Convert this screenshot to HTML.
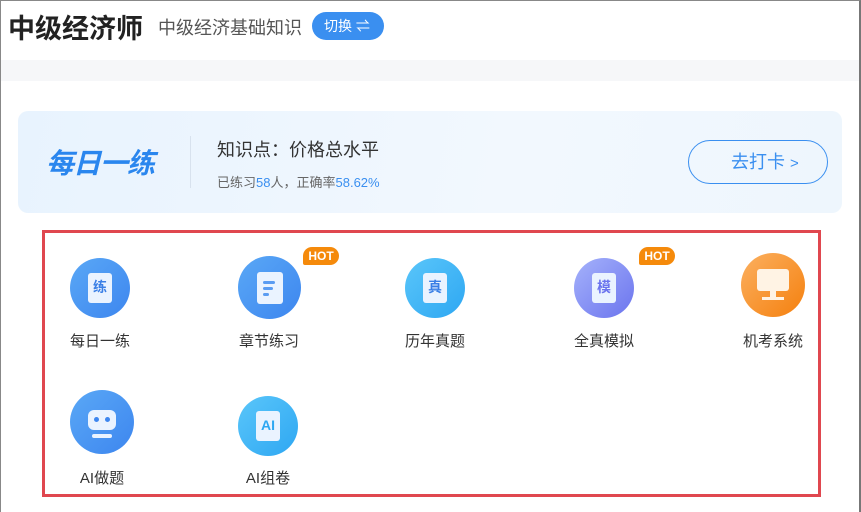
<!DOCTYPE html>
<html><head><meta charset="utf-8"><style>
*{margin:0;padding:0;box-sizing:border-box}
body{width:861px;height:512px;overflow:hidden;background:#fff;font-family:"Liberation Sans","Noto Sans CJK SC",sans-serif;position:relative}
.frame{position:absolute;left:0;top:0;width:861px;height:512px;border:1px solid #888;border-right:2px solid #777;border-bottom:none}
.abs{position:absolute}
.title{left:8px;top:7px;font-size:27px;font-weight:bold;color:#222}
.sub{left:158px;top:14px;font-size:18px;color:#555}
.sw{left:312px;top:12px;width:72px;height:28px;border-radius:14px;background:#3a8ff0;color:#fff;font-size:14px;line-height:28px;padding-left:12px}
.band{left:1px;top:60px;width:858px;height:21px;background:#f6f7f9}
.card{left:18px;top:111px;width:824px;height:102px;border-radius:10px;background:linear-gradient(100deg,#e8f3fe,#f2f8fe 60%,#eef6fd)}
.logo{left:46px;top:142px;font-size:28px;font-weight:bold;font-style:italic;color:#2a86ee;letter-spacing:-1px}
.div{left:190px;top:136px;width:1px;height:52px;background:#d8e2ee}
.kp{left:217px;top:136px;font-size:18px;color:#333}
.st{left:217px;top:172px;font-size:13px;color:#666}
.st b{font-weight:normal;color:#3a8ff0}
.btn{left:688px;top:140px;width:140px;height:44px;border:1px solid #3a8ff0;border-radius:22px;color:#3a8ff0;font-size:18px;line-height:42px;padding-left:42px}
.red{left:42px;top:230px;width:779px;height:267px;border:3px solid #e0474f}
.c{position:absolute;border-radius:50%}
.lb{position:absolute;width:120px;text-align:center;font-size:15px;color:#333}
.doc{position:absolute;left:50%;top:50%;width:24px;height:30px;margin:-15px 0 0 -12px;background:#eaf3ff;border-radius:3px;color:#3a7fe6;font-size:14px;font-weight:bold;line-height:28px;text-align:center}
.hot{position:absolute;background:#f58a0b;color:#fff;font-size:12px;font-weight:bold;width:36px;height:18px;line-height:18px;border-radius:9px 9px 9px 2px;text-align:center}
.ln{position:absolute;height:3px;background:#5a9cf2;border-radius:2px}
</style></head><body>
<div class="frame"></div>
<div class="abs title">中级经济师</div>
<div class="abs sub">中级经济基础知识</div>
<div class="abs sw">切换 ⇌</div>
<div class="abs band"></div>
<div class="abs card"></div>
<div class="abs logo">每日一练</div>
<div class="abs div"></div>
<div class="abs kp">知识点：价格总水平</div>
<div class="abs st">已练习<b>58</b>人，正确率<b>58.62%</b></div>
<div class="abs btn">去打卡 <span style="font-size:15px">&gt;</span></div>
<div class="abs red"></div>

<div class="c" style="left:70px;top:258px;width:60px;height:60px;background:linear-gradient(135deg,#5aa8f6,#3d86ef)"><div class="doc">练</div></div>
<div class="lb" style="left:40px;top:330px">每日一练</div>

<div class="c" style="left:238px;top:256px;width:63px;height:63px;background:linear-gradient(135deg,#5aa8f6,#3d86ef)"><div class="doc" style="width:26px;height:32px;margin:-16px 0 0 -13px"><div class="ln" style="left:6px;top:9px;width:12px"></div><div class="ln" style="left:6px;top:15px;width:10px"></div><div class="ln" style="left:6px;top:21px;width:6px"></div></div></div>
<div class="lb" style="left:209px;top:330px">章节练习</div>

<div class="c" style="left:405px;top:258px;width:60px;height:60px;background:linear-gradient(135deg,#5ac6fa,#2ea7f2)"><div class="doc">真</div></div>
<div class="lb" style="left:375px;top:330px">历年真题</div>

<div class="c" style="left:574px;top:258px;width:60px;height:60px;background:linear-gradient(135deg,#a5b2fb,#6b74ee)"><div class="doc" style="color:#6b74ee">模</div></div>
<div class="lb" style="left:544px;top:330px">全真模拟</div>

<div class="c" style="left:741px;top:253px;width:64px;height:64px;background:linear-gradient(135deg,#fbb060,#f5800e)"><div style="position:absolute;left:16px;top:16px;width:32px;height:22px;background:#fff3e4;border-radius:3px"></div><div style="position:absolute;left:29px;top:38px;width:6px;height:6px;background:#fff3e4"></div><div style="position:absolute;left:21px;top:44px;width:22px;height:3px;background:#fff3e4"></div></div>
<div class="lb" style="left:713px;top:330px">机考系统</div>

<div class="hot" style="left:303px;top:247px">HOT</div>
<div class="hot" style="left:639px;top:247px">HOT</div>

<div class="c" style="left:70px;top:390px;width:64px;height:64px;background:linear-gradient(135deg,#5aa8f6,#3d86ef)"><div style="position:absolute;left:18px;top:20px;width:28px;height:20px;background:#eaf3ff;border-radius:6px"></div><div style="position:absolute;left:24px;top:27px;width:5px;height:5px;border-radius:50%;background:#3d86ef"></div><div style="position:absolute;left:35px;top:27px;width:5px;height:5px;border-radius:50%;background:#3d86ef"></div><div style="position:absolute;left:22px;top:44px;width:20px;height:4px;background:#eaf3ff;border-radius:2px"></div></div>
<div class="lb" style="left:42px;top:467px">AI做题</div>

<div class="c" style="left:238px;top:396px;width:60px;height:60px;background:linear-gradient(135deg,#5ac6fa,#2ea7f2)"><div class="doc" style="color:#2ea7f2">AI</div></div>
<div class="lb" style="left:208px;top:467px">AI组卷</div>
</body></html>
